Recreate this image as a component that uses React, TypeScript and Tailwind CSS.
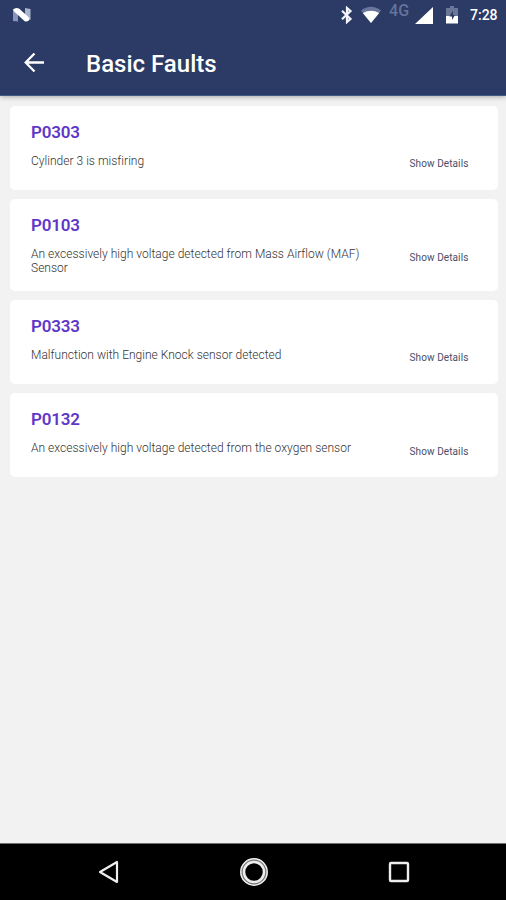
import React from 'react';

interface Fault {
  code: string;
  description: string;
  size: string;
}

const FAULTS: Fault[] = [
  { code: 'P0303', description: 'Cylinder 3 is misfiring', size: 'h-[84.5px]' },
  {
    code: 'P0103',
    description: 'An excessively high voltage detected from Mass Airflow (MAF) Sensor',
    size: 'h-[92px]',
  },
  { code: 'P0333', description: 'Malfunction with Engine Knock sensor detected', size: 'h-[84.5px]' },
  { code: 'P0132', description: 'An excessively high voltage detected from the oxygen sensor', size: 'h-[84.5px]' },
];

const StatusBar = (): React.ReactNode => (
  <div className="flex h-[30px] items-start">
    <svg className="mt-[7px] ml-3 h-4 w-5" viewBox="0 0 20 16">
      <path d="M1 3.5V14l5 .5V5z" fill="#8995b8" />
      <path d="M13 1l5.5 1v11L13 11z" fill="#a9b3cc" />
      <path d="M1 2.5Q3.5 0 7 1.5L17.5 11Q17.5 15 13 14.5L1.5 4z" fill="#fff" />
    </svg>
    <svg className="mt-1.5 ml-[308px] h-[18px] w-3.5" viewBox="0 0 14 18" fill="none" stroke="#f4f6fb">
      <path d="M2 4.8 10.5 13 7 16V2l3.5 3L2 13.2" strokeWidth="2.2" />
    </svg>
    <svg className="mt-1.5 ml-[7px] h-[18px] w-5" viewBox="0 0 20 18">
      <path d="M0 4.5Q10-3 20 4.5L10 17z" fill="#69759a" />
      <path d="M1.8 7Q10 2.5 18.2 7L10 17z" fill="#fff" />
    </svg>
    <span className="mt-[3px] ml-2 w-[23px] text-[16px] leading-4 font-medium tracking-[0.2px] text-[#65739a]">4G</span>
    <svg className="mt-[7px] ml-[3px] h-[17px] w-[18px]" viewBox="0 0 18 17">
      <path d="M0 17 18 0V17z" fill="#fff" />
    </svg>
    <svg className="mt-1.5 ml-[13px] h-[18px] w-3" viewBox="0 0 12 18">
      <path d="M4 0h4v2h4v8H0V2h4z" fill="#6b7799" />
      <path d="M0 10h12v7.5H0z" fill="#fff" />
      <path d="M7 4.5 3.5 10.5H6V14l3-5H7z" fill="#2b3b66" />
    </svg>
    <span className="mt-[7px] ml-3 text-[14px] leading-4 font-medium text-white">7:28</span>
  </div>
);

const Header = (): React.ReactNode => (
  <header className="z-10 h-24 shrink-0 border-b border-[#3f5c85] bg-[#2b3b66] shadow-[0_1px_5px_rgba(0,0,0,0.3)]">
    <StatusBar />
    <div className="flex h-[66px] items-center">
      <svg className="ml-6 h-5 w-5" viewBox="0 0 20 20" fill="none" stroke="#fff" strokeWidth="2.3">
        <path d="M20 9.5H2M10.5.5 1.7 9.5l8.8 9" />
      </svg>
      <h1 className="mt-px ml-[42px] text-[24px] leading-7 font-medium text-white">Basic Faults</h1>
    </div>
  </header>
);

const FaultCard = ({ fault }: { fault: Fault }): React.ReactNode => (
  <article className={`flex shrink-0 rounded-[5px] bg-white pl-[21px] ${fault.size}`}>
    <div className="w-[378px] pt-4">
      <h2 className="text-[17px] leading-5 font-semibold tracking-[-0.2px] text-[#5f37c8]">{fault.code}</h2>
      <p className="mt-[12.5px] w-[345px] text-[12px] leading-[14px] font-light tracking-[0.02px] text-[#333]">
        {fault.description}
      </p>
    </div>
    <button className="mt-[51.8px] ml-[0.5px] h-[14px] text-[10px] leading-[14px] font-normal tracking-[0.1px] whitespace-nowrap text-[#4a4e68]">
      Show Details
    </button>
  </article>
);

const NavigationBar = (): React.ReactNode => (
  <nav className="flex h-[57px] shrink-0 items-center justify-between border-t border-[#707070] bg-black pr-24 pl-[97px]">
    <svg className="h-6 w-[22px]" viewBox="0 0 22 24" fill="none" stroke="#eee" strokeWidth="2.2">
      <path d="M20 2V22L3 12z" strokeLinejoin="round" />
    </svg>
    <svg className="h-[30px] w-[30px]" viewBox="0 0 30 30" fill="none" stroke="#eee">
      <circle cx="15" cy="15" r="11.5" stroke="#777" strokeWidth="4" />
      <circle cx="15" cy="15" r="13.2" strokeWidth="1.5" />
      <circle cx="15" cy="15" r="10" strokeWidth="2.5" />
    </svg>
    <svg className="h-[22px] w-[22px]" viewBox="0 0 22 22" fill="none" stroke="#eee" strokeWidth="2.4">
      <rect x="2" y="2" width="18" height="18" rx="1" />
    </svg>
  </nav>
);

const App: React.FC = () => {
  return (
    <div className="flex h-[900px] w-[506px] flex-col overflow-hidden bg-[#f2f2f2] font-['Roboto',sans-serif]">
      <Header />
      <main className="flex flex-1 flex-col gap-[8.8px] pt-[9.6px] pr-[8.5px] pl-2.5">
        {FAULTS.map((fault) => (
          <FaultCard key={fault.code} fault={fault} />
        ))}
      </main>
      <NavigationBar />
    </div>
  );
};

export default App;
